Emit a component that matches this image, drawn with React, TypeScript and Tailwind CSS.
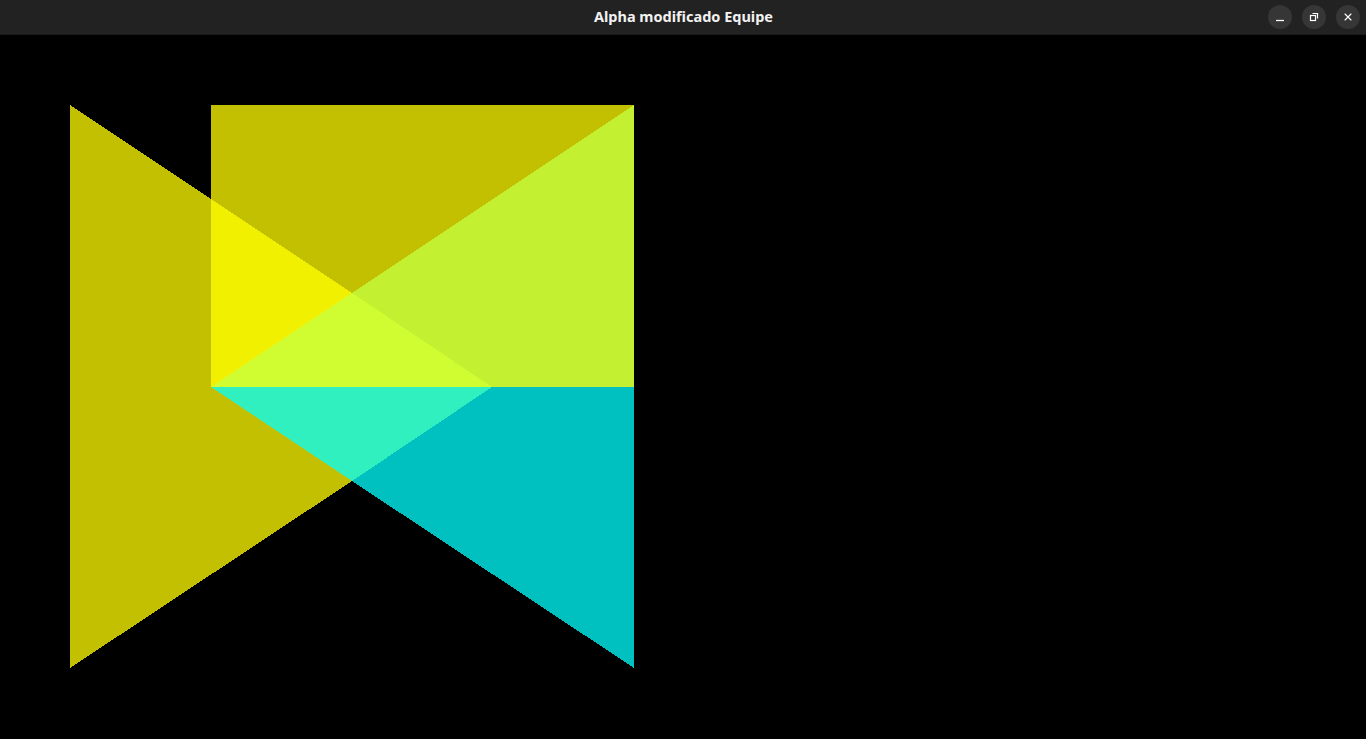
import { X } from "lucide-react";

const regions = [
  { fill: "#c2c000", pts: "70,70 211,164 211,352 352,446 70,633" },
  { fill: "#c2c000", pts: "211,70 634,70 352,258 211,164" },
  { fill: "#f0f000", pts: "211,164 352,258 211,352" },
  { fill: "#c4f032", pts: "634,70 634,352 492,352 352,258" },
  { fill: "#d0fc32", pts: "352,258 492,352 211,352" },
  { fill: "#30f0c0", pts: "211,352 492,352 352,446" },
  { fill: "#00c0c0", pts: "492,352 634,352 634,633 352,446" },
];

function RestoreIcon() {
  return (
    <svg width="10" height="10" viewBox="0 0 10 10" fill="none" stroke="white" strokeWidth="1.2">
      <rect x="1.5" y="3.5" width="5" height="5" />
      <path d="M3.5 1.5h5v5" />
    </svg>
  );
}

function MinIcon() {
  return (
    <svg width="10" height="10" viewBox="0 0 10 10" fill="none" stroke="white" strokeWidth="1.3">
      <path d="M1 8.5h8" />
    </svg>
  );
}

export default function App() {
  return (
    <div className="flex flex-col w-[1366px] h-[739px] bg-black overflow-hidden">
      <div className="relative h-[35px] bg-[#222222] border-b border-[#1a1a1a] flex items-center justify-center">
        <span className="text-[14.5px] font-bold text-[#f2f2f2] font-['Noto_Sans',sans-serif] pl-[1px]">
          Alpha modificado Equipe
        </span>
        <div className="absolute right-[6px] top-[5px] flex gap-[10px]">
          <button className="w-6 h-6 rounded-full bg-[#363636] flex items-center justify-center">
            <MinIcon />
          </button>
          <button className="w-6 h-6 rounded-full bg-[#363636] flex items-center justify-center">
            <RestoreIcon />
          </button>
          <button className="w-6 h-6 rounded-full bg-[#363636] flex items-center justify-center">
            <X size={12} color="white" strokeWidth={2.2} />
          </button>
        </div>
      </div>
      <div className="flex-1 bg-black">
        <svg width="1366" height="704" viewBox="0 0 1366 704" shapeRendering="crispEdges">
          {regions.map((r, i) => (
            <polygon key={i} points={r.pts} fill={r.fill} />
          ))}
        </svg>
      </div>
    </div>
  );
}
